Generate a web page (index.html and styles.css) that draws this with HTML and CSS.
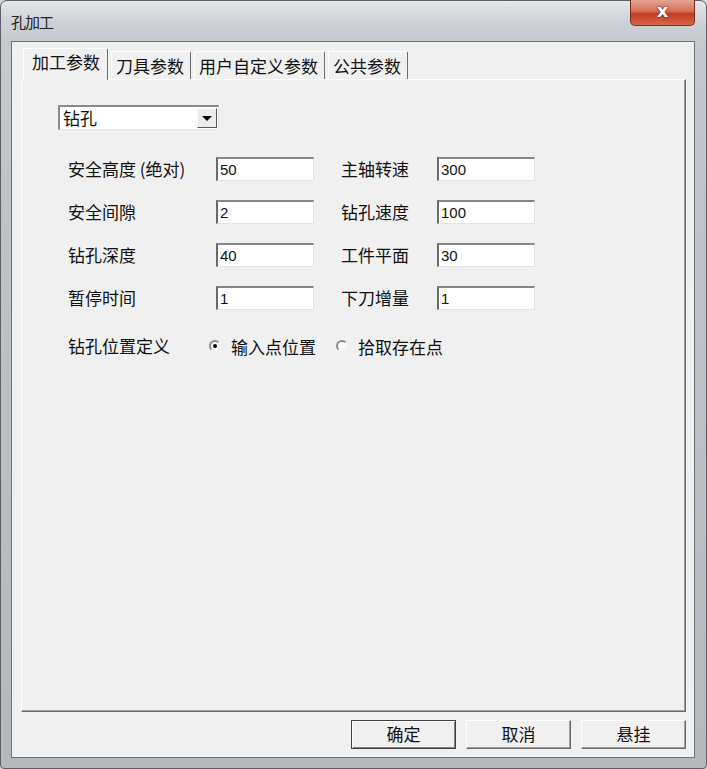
FILE: index.html
```html
<!DOCTYPE html>
<html lang="zh-CN">
<head>
  <meta charset="UTF-8" />
  <meta name="viewport" content="width=device-width, initial-scale=1.0"/>
  <title>孔加工</title>
  <link rel="stylesheet" href="styles.css">
</head>
<body>

  <div class="window">
    <div class="titlebar">
      <span class="title">孔加工</span>
      <div class="close-btn">x</div>
    </div>

    <div class="client">
      <!-- Tabs -->
      <div class="tabs">
        <div class="tab active">加工参数</div>
        <div class="tab">刀具参数</div>
        <div class="tab">用户自定义参数</div>
        <div class="tab">公共参数</div>
      </div>

      <div class="panel">
        <div class="combo">
          <span class="combo-text">钻孔</span>
          <span class="combo-btn"><span class="arrow"></span></span>
        </div>

        <div class="param-grid">
          <label class="label">安全高度 (绝对)</label>
          <div class="field">50</div>
          <label class="label right">主轴转速</label>
          <div class="field">300</div>

          <label class="label">安全间隙</label>
          <div class="field">2</div>
          <label class="label right">钻孔速度</label>
          <div class="field">100</div>

          <label class="label">钻孔深度</label>
          <div class="field">40</div>
          <label class="label right">工件平面</label>
          <div class="field">30</div>

          <label class="label">暂停时间</label>
          <div class="field">1</div>
          <label class="label right">下刀增量</label>
          <div class="field">1</div>
        </div>

        <div class="radio-row">
          <span class="label radio-label">钻孔位置定义</span>
          <span class="radio checked"></span>
          <span class="radio-text">输入点位置</span>
          <span class="radio second"></span>
          <span class="radio-text">拾取存在点</span>
        </div>
      </div>

      <div class="buttons">
        <div class="btn default">确定</div>
        <div class="btn">取消</div>
        <div class="btn">悬挂</div>
      </div>
    </div>
  </div>

</body>
</html>
```

FILE: styles.css
```css
body {
  margin: 0;
  font-family: "Noto Sans CJK SC", "Noto Sans", sans-serif;
  background: #d4d7da;
}

.window {
  width: 707px;
  height: 769px;
  box-sizing: border-box;
  padding: 0 11px 10px 10px;
  display: flex;
  flex-direction: column;
  background: linear-gradient(to bottom, #e4e6e8 0px, #cdd1d5 22px, #c6cacf 40px, #bfc3c7 200px, #b6b9bc 769px);
  border: 1px solid #5c5f63;
  border-radius: 7px 7px 4px 4px;
}

.titlebar {
  height: 40px;
  flex: none;
  display: flex;
  justify-content: space-between;
  align-items: flex-start;
}

.title {
  margin-top: 10px;
  font-size: 15px;
  color: #222;
  letter-spacing: -1px;
}

.close-btn {
  width: 65px;
  height: 26px;
  margin-top: -1px;
  box-sizing: border-box;
  border: 1px solid #7a2a1e;
  border-top: none;
  border-radius: 0 0 5px 5px;
  background: linear-gradient(to bottom, #e4a594 0%, #d47059 45%, #c33b22 55%, #d7674a 100%);
  color: #fff;
  font-family: "DejaVu Sans", sans-serif;
  font-weight: bold;
  font-size: 18px;
  line-height: 21px;
  text-align: center;
  text-shadow: 0 0 2px #6a1a10, 0 0 1px #6a1a10;
}

.client {
  flex: 1;
  display: flex;
  flex-direction: column;
  background: #f0f0f0;
  border: 1px solid #6e7277;
}

/* Tabs */
.tabs {
  height: 37px;
  flex: none;
  display: flex;
  align-items: flex-end;
  padding-left: 11px;
  position: relative;
  z-index: 1;
}

.tab {
  height: 28px;
  box-sizing: border-box;
  padding: 2px 6px 0 4px;
  margin-right: 3px;
  font-size: 17px;
  line-height: 24px;
  color: #111;
  border-top: 1px solid #fff;
  border-left: 1px solid #fff;
  border-right: 1px solid #6b6b6b;
  border-radius: 2px 2px 0 0;
}

.tab.active {
  height: 32px;
  margin-bottom: -1px;
  padding: 1px 7px 0 8px;
  background: #f0f0f0;
}

.panel {
  height: 633px;
  box-sizing: border-box;
  margin: 0 8px 0 9px;
  padding: 25px 0 0 36px;
  border-top: 1px solid #fff;
  border-left: 1px solid #fff;
  border-right: 1px solid #6b6b6b;
  border-bottom: 1px solid #6b6b6b;
  box-shadow: inset -1px -1px 0 #a0a0a0;
}

/* Combo box */
.combo {
  width: 161px;
  height: 25px;
  box-sizing: border-box;
  display: flex;
  justify-content: space-between;
  align-items: center;
  background: #fff;
  border-top: 2px solid #8a8a8a;
  border-left: 2px solid #8a8a8a;
  border-right: 1px solid #e6e6e6;
  border-bottom: 1px solid #e6e6e6;
}

.combo-text {
  padding-left: 3px;
  font-size: 17px;
  line-height: 22px;
  color: #111;
}

.combo-btn {
  width: 20px;
  height: 20px;
  margin-right: 1px;
  box-sizing: border-box;
  display: flex;
  align-items: center;
  justify-content: center;
  background: #ececec;
  border-top: 1px solid #fff;
  border-left: 1px solid #fff;
  border-right: 1px solid #555;
  border-bottom: 1px solid #555;
}

.arrow {
  width: 0;
  height: 0;
  border-left: 5px solid transparent;
  border-right: 5px solid transparent;
  border-top: 5px solid #000;
}

/* Parameter grid */
.param-grid {
  margin: 27px 0 0 10px;
  display: grid;
  grid-template-columns: 148px 98px 123px 98px;
  grid-auto-rows: 24px;
  row-gap: 19px;
  align-items: center;
}

.label {
  font-size: 17px;
  color: #111;
  line-height: 24px;
  white-space: nowrap;
}

.label.right {
  padding-left: 27px;
}

.field {
  height: 24px;
  box-sizing: border-box;
  padding-left: 2px;
  background: #fff;
  border-top: 2px solid #868686;
  border-left: 2px solid #6a6a6a;
  border-right: 1px solid #e3e3e3;
  border-bottom: 1px solid #e3e3e3;
  font-family: "Liberation Sans", Arial, sans-serif;
  font-size: 15px;
  line-height: 21px;
  color: #111;
}

/* Radio row */
.radio-row {
  margin: 24px 0 0 10px;
  height: 24px;
  display: flex;
  align-items: center;
}

.radio-label {
  width: 141px;
}

.radio {
  width: 12px;
  height: 12px;
  box-sizing: border-box;
  border-radius: 50%;
  border: 2px solid;
  border-color: #8a8a8a #f4f4f4 #f4f4f4 #8a8a8a;
  background: #fafafa;
  display: flex;
  align-items: center;
  justify-content: center;
  margin-right: 10px;
}

.radio.checked::after {
  content: "";
  width: 4px;
  height: 4px;
  border-radius: 50%;
  background: #000;
}

.radio.second {
  margin-left: 20px;
}

.radio-text {
  font-size: 17px;
  color: #111;
}

/* Bottom buttons */
.buttons {
  display: flex;
  justify-content: flex-end;
  gap: 10px;
  margin: 8px 8px 0 0;
}

.btn {
  width: 105px;
  height: 29px;
  box-sizing: border-box;
  background: #f0f0f0;
  border-top: 1px solid #fff;
  border-left: 1px solid #fff;
  border-right: 1px solid #696969;
  border-bottom: 1px solid #696969;
  box-shadow: inset -1px -1px 0 #a0a0a0;
  text-align: center;
  font-size: 17px;
  line-height: 26px;
  color: #111;
}

.btn.default {
  border: 1px solid #404040;
  box-shadow: inset 1px 1px 0 #fff, inset -1px -1px 0 #808080;
}
```
